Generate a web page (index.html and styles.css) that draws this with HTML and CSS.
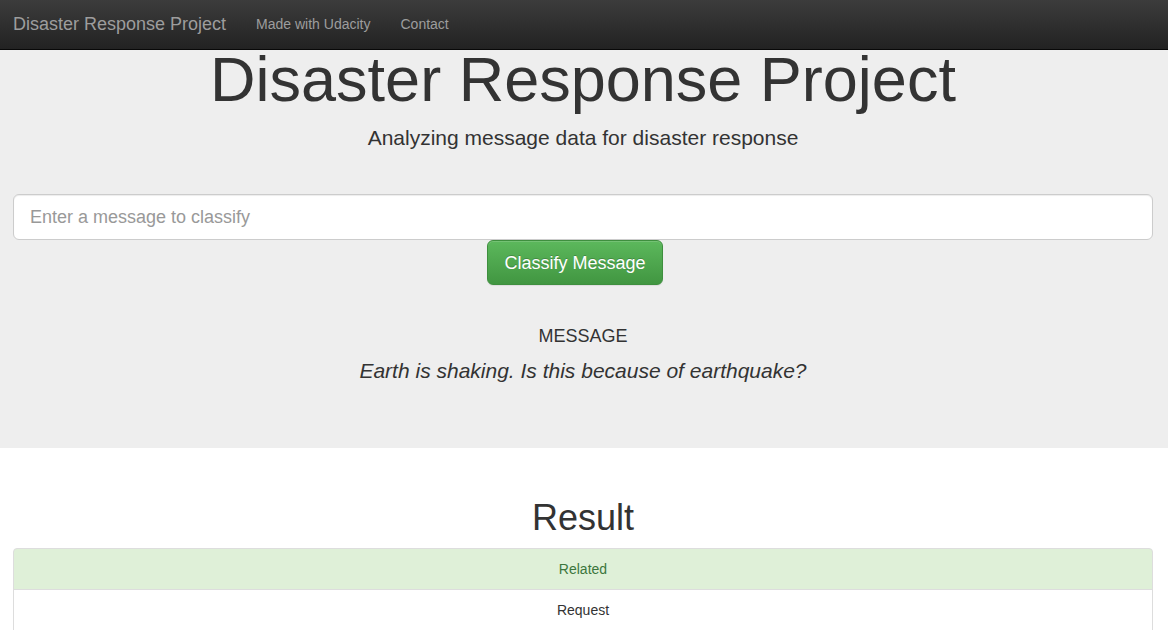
FILE: index.html
```html
<!DOCTYPE html>
<html lang="en">
<head>
<meta charset="utf-8">
<title>Disaster Response Project</title>
<link rel="stylesheet" href="styles.css">
</head>
<body>
<nav class="navbar">
  <a class="brand" href="#">Disaster Response Project</a>
  <a class="nav-link" href="#">Made with Udacity</a>
  <a class="nav-link" href="#">Contact</a>
</nav>
<section class="jumbotron">
  <h1 class="title">Disaster Response Project</h1>
  <p class="lead">Analyzing message data for disaster response</p>
  <form class="classify-form">
    <input class="msg-input" type="text" placeholder="Enter a message to classify">
    <button class="btn-classify" type="button">Classify Message</button>
  </form>
  <div class="message-block">
    <div class="message-label">MESSAGE</div>
    <div class="message-text">Earth is shaking. Is this because of earthquake?</div>
  </div>
</section>
<section class="results">
  <h1 class="result-title">Result</h1>
  <ul class="list-group">
    <li class="list-item success">Related</li>
    <li class="list-item">Request</li>
  </ul>
</section>
</body>
</html>
```

FILE: styles.css
```css
* { box-sizing: border-box; }
html, body { margin: 0; padding: 0; }
body {
  font-family: "Liberation Sans", Arial, sans-serif;
  font-size: 14px;
  line-height: 1.42857;
  color: #333;
  background: #fff;
  overflow: hidden;
}
.navbar {
  height: 50px;
  display: flex;
  align-items: center;
  padding-bottom: 2px;
  background: linear-gradient(to bottom, #3c3c3c 0%, #222 100%);
  border-bottom: 1px solid #080808;
}
.brand {
  font-size: 18px;
  color: #9d9d9d;
  text-decoration: none;
  padding: 0 15px 0 13px;
  line-height: 20px;
}
.nav-link {
  font-size: 14px;
  color: #9d9d9d;
  text-decoration: none;
  padding: 0 15px;
  line-height: 20px;
}
.jumbotron {
  background: #eee;
  height: 398px;
  padding: 1px 15px 0 13px;
  text-align: center;
}
.title {
  font-size: 63px;
  font-weight: 500;
  line-height: 56px;
  margin: 0;
  color: #333;
}
.lead {
  font-size: 21px;
  line-height: 30px;
  margin: 16px 0 0;
  font-weight: 400;
}
.classify-form {
  margin-top: 41px;
  display: flex;
  flex-direction: column;
  align-items: center;
}
.msg-input {
  width: 100%;
  height: 46px;
  padding: 10px 16px;
  font-family: inherit;
  font-size: 18px;
  color: #555;
  background: #fff;
  border: 1px solid #ccc;
  border-radius: 6px;
  box-shadow: inset 0 1px 1px rgba(0,0,0,.075);
  outline: none;
}
.msg-input::placeholder { color: #999; }
.btn-classify {
  height: 45px;
  margin-right: 16px;
  padding: 2px 16px 0;
  font-family: inherit;
  font-size: 18px;
  color: #fff;
  background: linear-gradient(to bottom, #5cb85c 0%, #419641 100%);
  border: 1px solid #3e8f3e;
  border-radius: 6px;
  text-shadow: 0 -1px 0 rgba(0,0,0,.2);
  box-shadow: inset 0 1px 0 rgba(255,255,255,.15), 0 1px 1px rgba(0,0,0,.075);
  cursor: pointer;
}
.message-block {
  margin-top: 39px;
}
.message-label {
  font-size: 18px;
  line-height: 24px;
}
.message-text {
  font-size: 21px;
  font-style: italic;
  line-height: 24px;
  margin-top: 11px;
}
.results {
  padding: 0 15px 0 13px;
  text-align: center;
}
.result-title {
  font-size: 36px;
  font-weight: 500;
  line-height: 40px;
  margin: 50px 0 0;
  color: #333;
}
.list-group {
  list-style: none;
  margin: 10px 0 0;
  padding: 0;
}
.list-item {
  padding: 10px 15px;
  border: 1px solid #ddd;
  margin-bottom: -1px;
  background: #fff;
  font-size: 14px;
  line-height: 20px;
}
.list-item:first-child {
  border-top-left-radius: 4px;
  border-top-right-radius: 4px;
}
.list-item.success {
  background: #dff0d8;
  color: #3c763d;
}
```
